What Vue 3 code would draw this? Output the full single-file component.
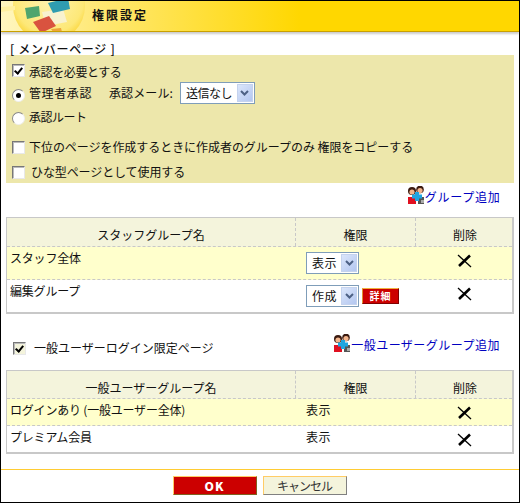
<script setup>
const staffRows = [
  { name: 'スタッフ全体', perm: '表示', hi: true },
  { name: '編集グループ', perm: '作成', hi: false, detail: true }
]
const userRows = [
  { name: 'ログインあり (一般ユーザー全体)', perm: '表示', hi: true },
  { name: 'プレミアム会員', perm: '表示', hi: false }
]
</script>

<template>
  <div class="page">
    <header class="head">
      <svg class="logo" width="96" height="30" viewBox="0 0 96 30">
        <defs>
          <radialGradient id="disc" cx="0.5" cy="0.4" r="0.6">
            <stop offset="0" stop-color="#fff3b0" />
            <stop offset="0.8" stop-color="#fde878" />
            <stop offset="1" stop-color="#fbd63a" />
          </radialGradient>
        </defs>
        <circle cx="48" cy="5" r="36" fill="url(#disc)" />
        <polygon points="0,6 14,5 14,9 0,11" fill="#fff0a0" />
        <polygon points="41,11 62,8 66,21 45,25" fill="#f8f2cf" />
        <polygon points="47,2 67,-3 69,8 52,12" fill="#2f9cb0" />
        <polygon points="24,7 38,5 39,15 26,18" fill="#4fa56e" />
        <polygon points="32,21 48,15 55,25 40,32" fill="#d9533f" />
        <polygon points="50,28 60,27 61,31 52,31" fill="#eda53a" />
      </svg>
      <h1 class="title">権限設定</h1>
    </header>

    <main class="body">
      <div class="section-title">[ メンバーページ ]</div>

      <section class="panel">
        <div class="line l1"><span class="cb on"></span><span>承認を必要とする</span></div>
        <div class="line l2">
          <span class="rb on"></span><span>管理者承認</span>
          <span class="mail-label">承認メール:</span>
          <div class="sel wide"><span>送信なし</span><i class="arrow"><svg width="9" height="6" viewBox="0 0 9 6"><path d="M1 1l3.5 3.5L8 1" fill="none" stroke="#4d6185" stroke-width="2" /></svg></i></div>
        </div>
        <div class="line l3"><span class="rb"></span><span>承認ルート</span></div>
        <div class="line l4"><span class="cb"></span><span>下位のページを作成するときに作成者のグループのみ 権限をコピーする</span></div>
        <div class="line l5"><span class="cb"></span><span class="sp">ひな型ページとして使用する</span></div>
      </section>

      <div class="addrow first">
        <a class="add tight">
          <svg class="gicon" width="18" height="18" viewBox="0 0 18 18">
            <rect x="0" y="11" width="8" height="7" fill="#e01020" />
            <rect x="10" y="11" width="6" height="7" fill="#555" />
            <circle cx="4" cy="5" r="4" fill="#3a1a10" />
            <circle cx="4" cy="6" r="2.6" fill="#f3b58c" />
            <circle cx="12" cy="3.5" r="3.8" fill="#3a1a10" />
            <circle cx="12" cy="4.6" r="2.6" fill="#f3b58c" />
            <path d="M9 6v9M4 10.5h10" stroke="#1fa5e0" stroke-width="4" />
            <rect x="13" y="14" width="3" height="3" fill="#aaa" />
          </svg><span>グループ追加</span>
        </a>
      </div>

      <section class="tbl">
        <div class="tr th staff-head">
          <div class="td c1">スタッフグループ名</div>
          <div class="td c2">権限</div>
          <div class="td c3">削除</div>
        </div>
        <div v-for="r in staffRows" :key="r.name" class="tr st" :class="{ hi: r.hi }">
          <div class="td c1 name">{{ r.name }}</div>
          <div class="td c2 perm">
            <div class="sel"><span>{{ r.perm }}</span><i class="arrow"><svg width="9" height="6" viewBox="0 0 9 6"><path d="M1 1l3.5 3.5L8 1" fill="none" stroke="#4d6185" stroke-width="2" /></svg></i></div>
            <button v-if="r.detail" class="detail">詳細</button>
          </div>
          <div class="td c3 del">
            <svg width="15" height="14" viewBox="0 0 15 14"><path d="M1 1l13 12" stroke="#000" stroke-width="1.3" /><path d="M13 1.5L2 12" stroke="#000" stroke-width="2.6" /></svg>
          </div>
        </div>
      </section>

      <div class="general">
        <div class="gen-check"><span class="cb on small"></span><span>一般ユーザーログイン限定ページ</span></div>
        <a class="add wide-link">
          <svg class="gicon" width="18" height="18" viewBox="0 0 18 18">
            <rect x="0" y="11" width="8" height="7" fill="#e01020" />
            <rect x="10" y="11" width="6" height="7" fill="#555" />
            <circle cx="4" cy="5" r="4" fill="#3a1a10" />
            <circle cx="4" cy="6" r="2.6" fill="#f3b58c" />
            <circle cx="12" cy="3.5" r="3.8" fill="#3a1a10" />
            <circle cx="12" cy="4.6" r="2.6" fill="#f3b58c" />
            <path d="M9 6v9M4 10.5h10" stroke="#1fa5e0" stroke-width="4" />
            <rect x="13" y="14" width="3" height="3" fill="#aaa" />
          </svg><span>一般ユーザーグループ追加</span>
        </a>
      </div>

      <section class="tbl">
        <div class="tr th user-head">
          <div class="td c1">一般ユーザーグループ名</div>
          <div class="td c2">権限</div>
          <div class="td c3">削除</div>
        </div>
        <div v-for="r in userRows" :key="r.name" class="tr us" :class="{ hi: r.hi }">
          <div class="td c1 name">{{ r.name }}</div>
          <div class="td c2 perm plain">{{ r.perm }}</div>
          <div class="td c3 del">
            <svg width="15" height="14" viewBox="0 0 15 14"><path d="M1 1l13 12" stroke="#000" stroke-width="1.3" /><path d="M13 1.5L2 12" stroke="#000" stroke-width="2.6" /></svg>
          </div>
        </div>
      </section>
    </main>

    <footer class="foot">
      <button class="btn ok">OK</button>
      <button class="btn cancel">キャンセル</button>
    </footer>
  </div>
</template>

<style>
html, body { margin: 0; background: #fff; }
</style>

<style scoped>
.page {
  width: 520px;
  height: 503px;
  box-sizing: border-box;
  border: 1px solid #000;
  background: #fff;
  font-family: "Noto Sans CJK JP", "Liberation Sans", sans-serif;
  font-size: 12px;
  line-height: 16px;
  color: #111;
  display: flex;
  flex-direction: column;
  overflow: hidden;
}
.head {
  position: relative;
  height: 31px;
  flex: none;
  box-sizing: border-box;
  border-bottom: 1px solid #c9a000;
  background: linear-gradient(90deg, #fff6c0 0, #ffe873 100px, #ffd700 300px);
  box-shadow: 0 2px 2px #ccc;
  display: flex;
  align-items: center;
  padding-left: 91px;
}
.logo { position: absolute; left: 0; top: 0; }
.title {
  position: relative;
  margin: -2px 0 0;
  font-size: 12px;
  font-weight: 700;
  letter-spacing: 2px;
}
.body { flex: 1; padding: 0 5px; }
.section-title { margin: 9px 0 0 4px; height: 14px; font-weight: 500; letter-spacing: 0.7px; }
.panel {
  width: 508px;
  height: 128px;
  background: #ede7ab;
  box-sizing: border-box;
  padding: 9px 0 0 6px;
}
.line { display: flex; align-items: center; gap: 4px; height: 16px; }
.l1 { letter-spacing: -0.4px; }
.l1 .cb { margin-top: -3px; }
.l2 { margin-top: 5px; letter-spacing: 0.6px; }
.l2 .rb { margin-top: 4px; }
.l3 { margin-top: 8px; letter-spacing: -0.5px; }
.l3 .rb { margin-top: 2px; }
.l4 { margin-top: 14px; letter-spacing: -0.05px; }
.l5 { margin-top: 9px; letter-spacing: -0.1px; }
.sp { margin-left: 2px; }
.cb {
  width: 11px;
  height: 11px;
  flex: none;
  background: #fff;
  border: 1px solid;
  border-color: #777 #e8e8e8 #e8e8e8 #777;
  box-shadow: inset 1px 1px 0 #bbb;
  position: relative;
}
.cb.on::after {
  content: "";
  position: absolute;
  left: 3px;
  top: 1px;
  width: 3px;
  height: 6px;
  border: solid #000;
  border-width: 0 2px 2px 0;
  transform: rotate(40deg);
}
.cb.small { background: #f4f4dc; }
.rb {
  width: 11px;
  height: 11px;
  flex: none;
  border-radius: 50%;
  background: #fff;
  border: 1px solid #aaa;
  border-color: #888 #eee #eee #888;
  position: relative;
}
.rb.on::after {
  content: "";
  position: absolute;
  left: 3px;
  top: 3px;
  width: 5px;
  height: 5px;
  border-radius: 50%;
  background: #000;
}
.mail-label { margin-left: 13px; margin-right: 3px; letter-spacing: 0.1px; }
.sel {
  width: 53px;
  height: 22px;
  box-sizing: border-box;
  border: 1px solid #7f9db9;
  background: #fff;
  display: inline-flex;
  align-items: center;
  justify-content: space-between;
  padding: 0 1px 0 5px;
  font-size: 12px;
  letter-spacing: 0.5px;
  flex: none;
}
.sel.wide { width: 75px; letter-spacing: -0.5px; }
.arrow {
  width: 16px;
  height: 18px;
  background: linear-gradient(135deg, #dbe6fb, #b4c7f0);
  border: 1px solid #c5d3ee;
  box-sizing: border-box;
  display: flex;
  align-items: center;
  justify-content: center;
}
.addrow {
  display: flex;
  justify-content: flex-end;
  padding-right: 14px;
}
.addrow.first { margin-top: 2px; height: 32px; }
.add {
  display: inline-flex;
  align-items: center;
  color: #0000c0;
  height: 24px;
}
.add.tight span { letter-spacing: 0.75px; margin-right: -0.6px; }
.add.wide-link span { letter-spacing: 0.48px; }
.gicon { flex: none; margin-top: -5px; margin-right: -1px; }
.tbl {
  width: 508px;
  box-sizing: border-box;
  border: 1px solid #c8c8c8;
  border-width: 1px 2px 2px 1px;
}
.tr { display: grid; grid-template-columns: 288px 121px 96px; }
.th { background: #f4f4dc; border-bottom: 1px dashed #c8c8c8; }
.staff-head { height: 28px; }
.user-head { height: 27px; }
.st { height: 33px; border-bottom: 1px dashed #c8c8c8; box-sizing: border-box; }
.st:last-child { border-bottom: 0; height: 32px; }
.us { height: 27px; border-bottom: 1px dashed #c8c8c8; box-sizing: border-box; }
.us:last-child { border-bottom: 0; height: 26px; }
.hi { background: #ffffcc; }
.td { display: flex; align-items: center; }
.th .td { justify-content: center; padding-top: 6px; box-sizing: border-box; }
.th .c2 { border-left: 1px dashed #c8c8c8; border-right: 1px dashed #c8c8c8; }
.th .c3 { padding-left: 2px; }
.name { padding: 0 0 5px 3px; letter-spacing: -0.2px; }
.st .name { padding-bottom: 10px; }
.perm { padding-left: 11px; gap: 3px; align-items: flex-start; }
.st .perm { padding-top: 5px; }
.plain { padding-top: 3px; letter-spacing: 0.5px; }
.del { justify-content: center; align-items: flex-start; padding: 7px 0 0 1px; }
.detail {
  width: 37px;
  height: 16px;
  margin-top: 3px;
  padding: 0;
  background: #cc0000;
  border: 1px solid;
  border-color: #f0b040 #800000 #800000 #e09030;
  color: #fff;
  font: 700 10px/14px "Noto Sans CJK JP", sans-serif;
  letter-spacing: 1px;
}
.general {
  display: flex;
  justify-content: space-between;
  align-items: flex-start;
  height: 56px;
  padding: 0 14px 0 7px;
  box-sizing: border-box;
}
.gen-check { display: flex; align-items: center; gap: 8px; margin-top: 26px; }
.general .add { margin-top: 19px; }
.foot {
  flex: none;
  height: 33px;
  border-top: 1px solid #ffcc33;
  display: flex;
  justify-content: center;
  gap: 6px;
  padding: 6px 0 0 0;
  box-sizing: border-box;
  margin-left: -1px;
}
.btn {
  width: 84px;
  height: 19px;
  padding: 0;
  box-sizing: border-box;
  font-family: "Noto Sans CJK JP", sans-serif;
  font-size: 12px;
  line-height: 15px;
}
.ok {
  background: #cc0000;
  color: #fff;
  font-weight: 900;
  letter-spacing: 1px;
  border: 1px solid;
  border-color: #ffcc66 #806020 #806020 #ffcc66;
}
.cancel {
  background: #f4f4dc;
  color: #333;
  letter-spacing: -1px;
  border: 1px solid;
  border-color: #ffcc66 #808080 #808080 #ffcc66;
}
</style>
